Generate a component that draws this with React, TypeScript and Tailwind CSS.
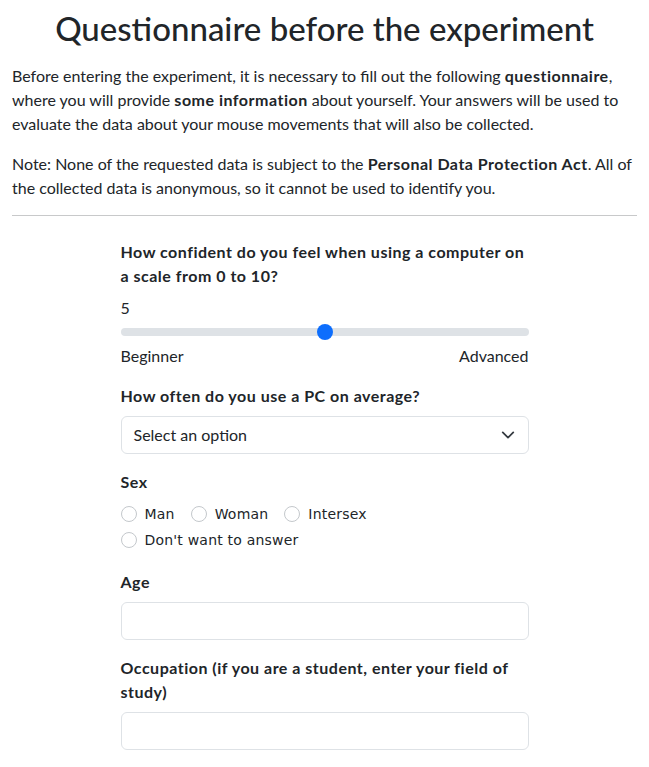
const font = "font-['Lato','Liberation_Sans',sans-serif]";

function Label({ children }: { children: React.ReactNode }) {
  return <div className="text-[16px] leading-[24px] font-bold tracking-[0.5px] text-[#212529]">{children}</div>;
}

function Radio({ label }: { label: string }) {
  return (
    <label className="flex items-center mr-4">
      <span className="w-4 h-4 rounded-full border border-[#c4c8cc] bg-white" />
      <span className="ml-2 font-['DejaVu_Sans',sans-serif] text-[14px] tracking-[0.2px] leading-[24px] text-[#212529]">{label}</span>
    </label>
  );
}

function Chevron() {
  return (
    <svg width="14" height="14" viewBox="0 0 16 16" fill="none">
      <path d="m2 5 6 6 6-6" stroke="#343a40" strokeWidth="2" strokeLinecap="round" strokeLinejoin="round" />
    </svg>
  );
}

export default function App() {
  return (
    <div className={`${font} bg-white text-[#212529] px-3 min-h-screen`}>
      <h1 className="pt-[9px] mb-[17px] text-center text-[33px] leading-[38px] font-medium">Questionnaire before the experiment</h1>
      <p className="text-[16px] leading-[24px] mb-4">
        Before entering the experiment, it is necessary to fill out the following <b className="tracking-[0.5px]">questionnaire</b>,<br />
        where you will provide <b className="tracking-[0.5px]">some information</b> about yourself. Your answers will be used to<br />
        evaluate the data about your mouse movements that will also be collected.
      </p>
      <p className="text-[16px] leading-[24px]">
        Note: None of the requested data is subject to the <b className="tracking-[0.5px]">Personal Data Protection Act</b>. All of<br />
        the collected data is anonymous, so it cannot be used to identify you.
      </p>
      <hr className="mt-[15px] border-0 border-t border-[#c8c9ca]" />

      <div className="w-[408px] mx-auto pt-[24px] pb-4">
        <Label>
          How confident do you feel when using a computer on<br />a scale from 0 to 10?
        </Label>
        <div className="mt-2 text-[16px] leading-[24px]">5</div>
        <div className="relative h-6 flex items-center">
          <div className="w-full h-2 rounded-full bg-[#dee2e6]" />
          <div className="absolute left-[196px] top-[4px] w-4 h-4 rounded-full bg-[#0d6efd]" />
        </div>
        <div className="flex justify-between text-[16px] leading-[24px]">
          <span>Beginner</span>
          <span>Advanced</span>
        </div>

        <div className="mt-4">
          <Label>How often do you use a PC on average?</Label>
        </div>
        <div className="mt-2 h-[38px] border border-[#dee2e6] rounded-md flex items-center justify-between pl-3 pr-[13px]">
          <span className="text-[16px]">Select an option</span>
          <Chevron />
        </div>

        <div className="mt-4">
          <Label>Sex</Label>
        </div>
        <div className="mt-2 flex">
          <Radio label="Man" />
          <Radio label="Woman" />
          <Radio label="Intersex" />
        </div>
        <div className="mt-[2px] flex">
          <Radio label="Don't want to answer" />
        </div>

        <div className="mt-[18px]">
          <Label>Age</Label>
        </div>
        <div className="mt-2 h-[38px] border border-[#dee2e6] rounded-md" />

        <div className="mt-4">
          <Label>
            Occupation (if you are a student, enter your field of<br />study)
          </Label>
        </div>
        <div className="mt-2 h-[38px] border border-[#dee2e6] rounded-md" />
      </div>
    </div>
  );
}
